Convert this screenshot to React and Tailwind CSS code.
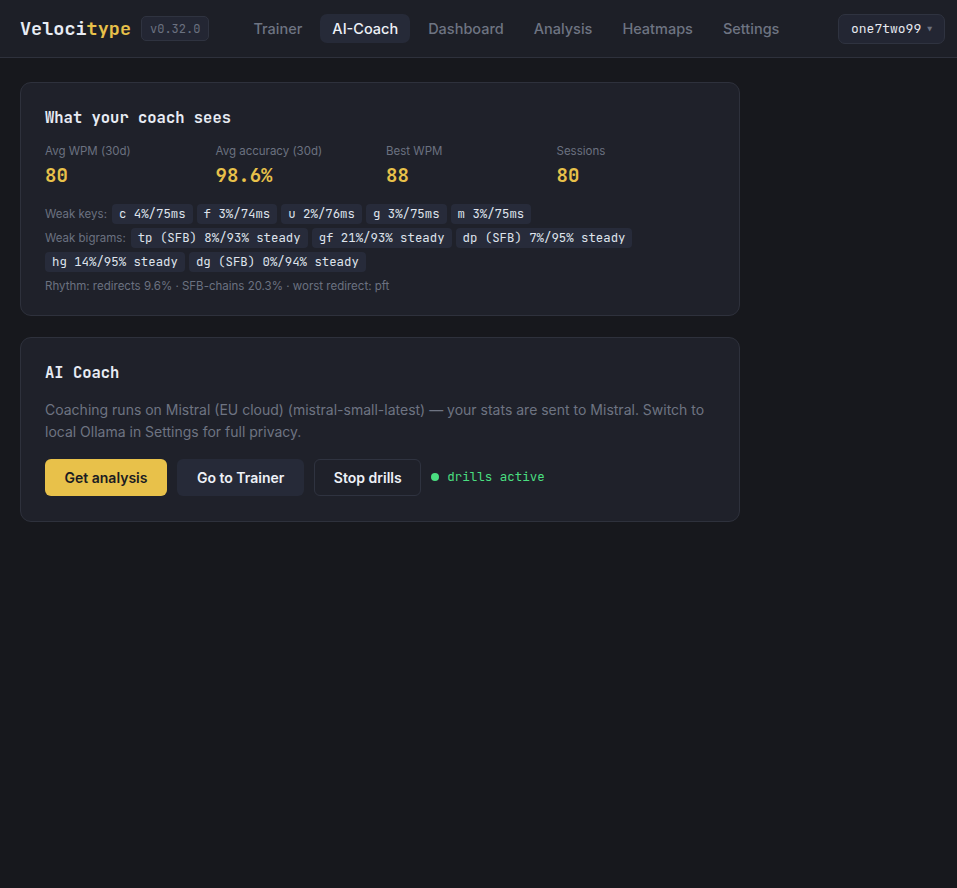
import React from 'react'

const mono = "font-['JetBrains_Mono','DejaVu_Sans_Mono',monospace]"
const sans = "font-['Inter','Noto_Sans',sans-serif]"

const navItems = ['Trainer', 'AI-Coach', 'Dashboard', 'Analysis', 'Heatmaps', 'Settings']

const stats = [
  { label: 'Avg WPM (30d)', value: '80' },
  { label: 'Avg accuracy (30d)', value: '98.6%' },
  { label: 'Best WPM', value: '88' },
  { label: 'Sessions', value: '80' },
]

const weakKeys = ['c 4%/75ms', 'f 3%/74ms', 'u 2%/76ms', 'g 3%/75ms', 'm 3%/75ms']
const weakBigrams = [
  'tp (SFB) 8%/93% steady',
  'gf 21%/93% steady',
  'dp (SFB) 7%/95% steady',
  'hg 14%/95% steady',
  'dg (SFB) 0%/94% steady',
]

const Chip = ({ children }) => (
  <span className={`${mono} bg-[#272b3a] text-[#dfe3ec] text-[12.35px] leading-[20px] px-[7px] rounded-[4px] whitespace-pre`}>
    {children}
  </span>
)

export default function App() {
  return (
    <div className={`${sans} min-h-[888px] bg-[#17181d] text-[#e5e7eb]`}>
      {/* Header */}
      <header className="h-[58px] bg-[#1d1f27] border-b border-[#2e313c] flex items-center pl-5 pr-3">
        <div className={`${mono} text-[18.5px] font-bold text-[#e8ecf4]`}>
          Veloci<span className="text-[#e8c14a]">type</span>
        </div>
        <span className={`${mono} ml-[10px] text-[12px] text-[#6b7180] border border-[#2f3340] bg-[#232633] rounded-[5px] px-[8px] h-[25px] flex items-center`}>
          v0.32.0
        </span>
        <nav className="flex items-center gap-[6px] ml-[32px]">
          {navItems.map(item => (
            <span
              key={item}
              className={
                item === 'AI-Coach'
                  ? 'text-[14.5px] text-[#eef1f7] bg-[#262a38] rounded-[7px] h-[29px] px-[12px] flex items-center font-medium'
                  : 'text-[14.5px] text-[#6e7482] h-[29px] px-[12px] flex items-center font-medium'
              }
            >
              {item}
            </span>
          ))}
        </nav>
        <div className="ml-auto">
          <div className={`${mono} h-[30px] px-[12px] flex items-center gap-[6px] bg-[#232633] border border-[#2f3340] rounded-[7px] text-[13px] text-[#e5e8ef]`}>
            one7two99
            <span className="text-[8px] text-[#6b7180]">▼</span>
          </div>
        </div>
      </header>

      <main className="px-5 pt-6 w-[760px] flex flex-col gap-[21px]">
        {/* What your coach sees */}
        <section className="bg-[#1f212a] border border-[#2e313c] rounded-[11px] px-6 pt-[23px] pb-[21px]">
          <h2 className={`${mono} text-[15.5px] font-bold text-[#e8ecf4]`}>What your coach sees</h2>
          <div className="grid grid-cols-4 gap-3 mt-[14px]">
            {stats.map(s => (
              <div key={s.label}>
                <div className="text-[11.5px] text-[#6b7180] leading-[16px]">{s.label}</div>
                <div className={`${mono} text-[19px] font-bold text-[#e8c14a] leading-[26px] mt-[4px]`}>{s.value}</div>
              </div>
            ))}
          </div>
          <div className="mt-[15px] flex flex-wrap items-center gap-[4px] text-[11.5px] text-[#6b7180]">
            <span className="mr-[1px]">Weak keys:</span>
            {weakKeys.map(k => <Chip key={k}>{k}</Chip>)}
          </div>
          <div className="mt-[4px] flex flex-wrap items-center gap-x-[4px] gap-y-[4px] text-[11.5px] text-[#6b7180]">
            <span className="mr-[1px]">Weak bigrams:</span>
            {weakBigrams.map(k => <Chip key={k}>{k}</Chip>)}
          </div>
          <div className="mt-[6px] text-[11.5px] text-[#6b7180] leading-[16px]">
            Rhythm: redirects 9.6% · SFB-chains 20.3% · worst redirect: pft
          </div>
        </section>

        {/* AI Coach */}
        <section className="bg-[#1f212a] border border-[#2e313c] rounded-[11px] px-6 pt-[23px] pb-[25px]">
          <h2 className={`${mono} text-[15.5px] font-bold text-[#e8ecf4]`}>AI Coach</h2>
          <p className="mt-[14px] text-[14px] leading-[22px] text-[#6e7482]">
            Coaching runs on Mistral (EU cloud) (mistral-small-latest) — your stats are sent to Mistral. Switch to local Ollama in Settings for full privacy.
          </p>
          <div className="mt-[16px] flex items-center gap-[10px]">
            <button className="h-[37px] px-[19.5px] rounded-[6px] bg-[#e8c14a] text-[#1b1c22] text-[14px] font-semibold">
              Get analysis
            </button>
            <button className="h-[37px] px-[20px] rounded-[6px] bg-[#262a38] text-[#eef1f7] text-[14px] font-semibold">
              Go to Trainer
            </button>
            <button className="h-[37px] px-[18.5px] rounded-[6px] border border-[#2f3340] text-[#eef1f7] text-[14px] font-semibold">
              Stop drills
            </button>
            <span className={`${mono} flex items-center gap-[8px] text-[12.5px] text-[#4ade80]`}>
              <span className="w-[8px] h-[8px] rounded-full bg-[#4ade80]" />
              drills active
            </span>
          </div>
        </section>
      </main>
    </div>
  )
}
